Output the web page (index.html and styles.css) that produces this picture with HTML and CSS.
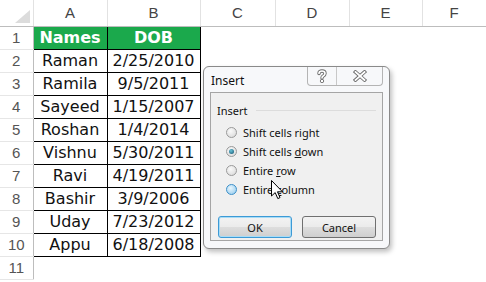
FILE: index.html
```html
<html lang="en">
<head>
  <meta charset="UTF-8">
  <title>Insert</title>
  <link rel="stylesheet" href="styles.css">
</head>
<body>
  <div class="sheet">
    <table class="grid">
      <colgroup>
        <col style="width:33px"><col style="width:74px"><col style="width:93px">
        <col style="width:75px"><col style="width:74px"><col style="width:73px"><col style="width:64px">
      </colgroup>
      <tr class="colhead">
        <th class="corner"><span class="tri"></span></th>
        <th>A</th><th>B</th><th>C</th><th>D</th><th>E</th><th>F</th>
      </tr>
      <tr><th class="rh">1</th><td class="d hdr">Names</td><td class="d hdr">DOB</td><td></td><td></td><td></td><td></td></tr>
      <tr><th class="rh">2</th><td class="d">Raman</td><td class="d">2/25/2010</td><td></td><td></td><td></td><td></td></tr>
      <tr><th class="rh">3</th><td class="d">Ramila</td><td class="d">9/5/2011</td><td></td><td></td><td></td><td></td></tr>
      <tr><th class="rh">4</th><td class="d">Sayeed</td><td class="d">1/15/2007</td><td></td><td></td><td></td><td></td></tr>
      <tr><th class="rh">5</th><td class="d">Roshan</td><td class="d">1/4/2014</td><td></td><td></td><td></td><td></td></tr>
      <tr><th class="rh">6</th><td class="d">Vishnu</td><td class="d">5/30/2011</td><td></td><td></td><td></td><td></td></tr>
      <tr><th class="rh">7</th><td class="d">Ravi</td><td class="d">4/19/2011</td><td></td><td></td><td></td><td></td></tr>
      <tr><th class="rh">8</th><td class="d">Bashir</td><td class="d">3/9/2006</td><td></td><td></td><td></td><td></td></tr>
      <tr><th class="rh">9</th><td class="d">Uday</td><td class="d">7/23/2012</td><td></td><td></td><td></td><td></td></tr>
      <tr><th class="rh">10</th><td class="d">Appu</td><td class="d">6/18/2008</td><td></td><td></td><td></td><td></td></tr>
      <tr><th class="rh">11</th><td></td><td></td><td></td><td></td><td></td><td></td></tr>
    </table>

    <div class="dialog">
      <div class="titlebar">
        <span class="title">Insert</span>
        <div class="caption">
          <span class="cap-btn help">
            <svg width="12" height="14" viewBox="0 0 12 14">
              <path d="M3 4.5 Q3 2 6 2 Q9 2 9 4.5 Q9 6 7.2 7 Q6 7.6 6 9" fill="none" stroke="#6b6b6b" stroke-width="3.4" stroke-linecap="round"/>
              <path d="M3 4.5 Q3 2 6 2 Q9 2 9 4.5 Q9 6 7.2 7 Q6 7.6 6 9" fill="none" stroke="#fff" stroke-width="1.6" stroke-linecap="round"/>
              <circle cx="6" cy="12" r="1.7" fill="#fff" stroke="#6b6b6b" stroke-width="0.9"/>
            </svg>
          </span>
          <span class="cap-btn close">
            <svg width="14" height="12" viewBox="0 0 14 12">
              <path d="M2.5 2 L11.5 10 M11.5 2 L2.5 10" stroke="#6b6b6b" stroke-width="3.6" stroke-linecap="square"/>
              <path d="M2.5 2 L11.5 10 M11.5 2 L2.5 10" stroke="#fff" stroke-width="1.8" stroke-linecap="square"/>
            </svg>
          </span>
        </div>
      </div>
      <div class="panel">
        <div class="group-label"><span>Insert</span><i class="rule"></i></div>
        <div class="options">
          <label class="opt"><span class="radio"></span><span>Shift cells ri<u>g</u>ht</span></label>
          <label class="opt"><span class="radio on"></span><span>Shift cells <u>d</u>own</span></label>
          <label class="opt"><span class="radio"></span><span>Entire <u>r</u>ow</span></label>
          <label class="opt"><span class="radio hover"></span><span>Entire <u>c</u>olumn</span></label>
        </div>
        <div class="buttons">
          <button class="btn default">OK</button>
          <button class="btn">Cancel</button>
        </div>
      </div>
    </div>

    <svg class="pointer" width="13" height="20" viewBox="0 0 13 20">
      <path d="M0.5 0.5 L0.5 16 L4.2 12.6 L6.8 18.6 L9 17.6 L6.5 11.8 L11.5 11.8 Z" fill="#fff" stroke="#000" stroke-width="1" stroke-linejoin="miter"/>
    </svg>
  </div>
</body>
</html>
```

FILE: styles.css
```css
body {
  margin: 0;
  background: #fff;
}
.sheet {
  position: relative;
  width: 486px;
  height: 282px;
  overflow: hidden;
}
.grid {
  border-collapse: collapse;
  table-layout: fixed;
  width: 486px;
  font-family: "DejaVu Sans", Verdana, sans-serif;
  font-size: 16px;
  color: #111;
}
.grid th,
.grid td {
  padding: 0;
  height: 23px;
  box-sizing: border-box;
  text-align: center;
  white-space: nowrap;
  overflow: hidden;
}
.colhead th {
  height: 26px;
  font-family: "Liberation Sans", Arial, sans-serif;
  font-weight: normal;
  font-size: 15px;
  color: #444;
  border-right: 1px solid #e2e2e2;
  border-bottom: 1px solid #bdbdbd;
}
.corner {
  position: relative;
}
.tri {
  position: absolute;
  right: 3px;
  bottom: 3px;
  width: 0;
  height: 0;
  border-left: 15px solid transparent;
  border-bottom: 13px solid #dcdcdc;
}
.rh {
  font-family: "Liberation Sans", Arial, sans-serif;
  font-weight: normal;
  font-size: 15px;
  color: #555;
  border-right: 1px solid #bdbdbd;
  border-bottom: 1px solid #e6e6e6;
}
.d {
  border: 1px solid #000;
}
.hdr {
  background: #1ba94c;
  color: #fff;
  font-weight: bold;
}

/* dialog */
.dialog {
  position: absolute;
  left: 203px;
  top: 66px;
  width: 185px;
  height: 181px;
  background: #f7f8fa;
  border: 1px solid #8a8a8a;
  border-radius: 6px;
  box-shadow: 2px 3px 5px rgba(0, 0, 0, 0.25);
  font-family: "Noto Sans", "Open Sans", sans-serif;
  font-size: 11px;
  color: #111;
}
.titlebar {
  display: flex;
  justify-content: space-between;
  height: 25px;
}
.title {
  padding: 5px 0 0 7px;
  font-size: 12px;
}
.caption {
  display: flex;
  margin-right: 6px;
  height: 18px;
  border: 1px solid #b4b4b4;
  border-top: none;
  border-radius: 0 0 4px 4px;
}
.cap-btn {
  display: flex;
  align-items: center;
  justify-content: center;
}
.help {
  width: 28px;
  border-right: 1px solid #c8c8c8;
}
.close {
  width: 45px;
}
.panel {
  margin: 0 6px;
  height: 147px;
  background: #f0f0f0;
  border: 1px solid #a5a5a5;
  padding: 0 6px;
}
.group-label {
  display: flex;
  align-items: center;
  gap: 8px;
  height: 14px;
  margin-top: 10px;
}
.rule {
  flex: 1;
  border-top: 1px solid #dcdcdc;
}
.options {
  display: flex;
  flex-direction: column;
  margin: 6px 0 0 9px;
}
.opt {
  display: flex;
  align-items: center;
  gap: 6px;
  height: 19px;
}
.radio {
  width: 11px;
  height: 11px;
  border-radius: 50%;
  border: 1px solid #9a9a9a;
  background: radial-gradient(circle at 40% 35%, #fafafa, #d6d6d6);
  box-sizing: border-box;
  position: relative;
}
.radio.on::after {
  content: "";
  position: absolute;
  left: 2px;
  top: 2px;
  width: 5px;
  height: 5px;
  border-radius: 50%;
  background: radial-gradient(circle at 40% 35%, #6ac3d8, #0f4f6c);
}
.radio.hover {
  border-color: #3c8fc8;
  background: radial-gradient(circle at 40% 35%, #e9f6fd, #8cc7ec);
}
.buttons {
  display: flex;
  gap: 10px;
  margin: 17px 0 0 1px;
}
.btn {
  width: 74px;
  height: 22px;
  font-family: "Noto Sans", "Open Sans", sans-serif;
  font-size: 11px;
  color: #111;
  border: 1px solid #707070;
  border-radius: 3px;
  background: linear-gradient(#f3f3f3 0%, #ebebeb 50%, #dddddd 51%, #cfcfcf 100%);
  padding: 0;
}
.btn.default {
  border-color: #3c9ad6;
  box-shadow: inset 0 0 0 1px #a8dcf6;
}
.pointer {
  position: absolute;
  left: 271px;
  top: 180px;
}
```
